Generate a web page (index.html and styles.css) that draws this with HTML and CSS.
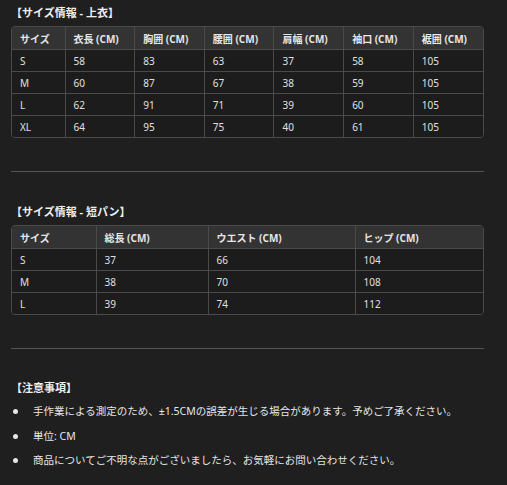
FILE: index.html
```html
<!DOCTYPE html>
<html lang="ja">
<head>
<meta charset="utf-8">
<link rel="stylesheet" href="styles.css">
</head>
<body>
<div class="page">
  <h2 class="title">【サイズ情報 - 上衣】</h2>
  <div class="table-wrap">
    <table class="size-table top">
      <colgroup>
        <col class="c-size"><col><col><col><col><col><col>
      </colgroup>
      <thead>
        <tr><th>サイズ</th><th>衣長 (CM)</th><th>胸囲 (CM)</th><th>腰囲 (CM)</th><th>肩幅 (CM)</th><th>袖口 (CM)</th><th>裾囲 (CM)</th></tr>
      </thead>
      <tbody>
        <tr><td>S</td><td>58</td><td>83</td><td>63</td><td>37</td><td>58</td><td>105</td></tr>
        <tr><td>M</td><td>60</td><td>87</td><td>67</td><td>38</td><td>59</td><td>105</td></tr>
        <tr><td>L</td><td>62</td><td>91</td><td>71</td><td>39</td><td>60</td><td>105</td></tr>
        <tr><td>XL</td><td>64</td><td>95</td><td>75</td><td>40</td><td>61</td><td>105</td></tr>
      </tbody>
    </table>
  </div>

  <hr class="divider">

  <h2 class="title second">【サイズ情報 - 短パン】</h2>
  <div class="table-wrap">
    <table class="size-table bottom">
      <colgroup>
        <col class="b1"><col class="b2"><col class="b3"><col>
      </colgroup>
      <thead>
        <tr><th>サイズ</th><th>総長 (CM)</th><th>ウエスト (CM)</th><th>ヒップ (CM)</th></tr>
      </thead>
      <tbody>
        <tr><td>S</td><td>37</td><td>66</td><td>104</td></tr>
        <tr><td>M</td><td>38</td><td>70</td><td>108</td></tr>
        <tr><td>L</td><td>39</td><td>74</td><td>112</td></tr>
      </tbody>
    </table>
  </div>

  <hr class="divider">

  <h2 class="title notes-title">【注意事項】</h2>
  <ul class="notes">
    <li>手作業による測定のため、±1.5CMの誤差が生じる場合があります。予めご了承ください。</li>
    <li>単位: CM</li>
    <li>商品についてご不明な点がございましたら、お気軽にお問い合わせください。</li>
  </ul>
</div>
</body>
</html>
```

FILE: styles.css
```css
html, body {
  margin: 0;
  padding: 0;
  background: #1f1f1f;
}
body {
  color: #e6e6e6;
  font-family: "Noto Sans", "Noto Sans CJK JP", sans-serif;
  font-size: 10px;
}
.page {
  width: 473px;
  padding: 5px 0 0 11px;
}
.title {
  margin: 0 0 5px 0;
  font-size: 11px;
  line-height: 16px;
  font-weight: bold;
  color: #eeeeee;
}
.title.second {
  margin-top: 32px;
}
.title.notes-title {
  margin-top: 31px;
  margin-bottom: 3px;
}
.table-wrap {
  border: 1px solid #4a4a4a;
  border-radius: 4px;
  overflow: hidden;
}
.size-table {
  width: 100%;
  border-collapse: collapse;
  table-layout: fixed;
}
.size-table th,
.size-table td {
  text-align: left;
  padding: 0 0 0 8px;
  border-left: 1px solid #4a4a4a;
  border-top: 1px solid #4a4a4a;
  white-space: nowrap;
}
.size-table th:first-child,
.size-table td:first-child {
  border-left: none;
}
.size-table thead th {
  border-top: none;
  background: #333333;
  font-weight: bold;
  height: 22px;
  color: #e6e6e6;
}
.size-table tbody td {
  background: #1c1c1c;
  height: 21px;
  color: #e0e0e0;
}
.size-table.top .c-size { width: 53px; }
.size-table.bottom .b1 { width: 84px; }
.size-table.bottom .b2 { width: 112px; }
.size-table.bottom .b3 { width: 147px; }
.divider {
  margin: 33px 0 0 0;
  border: none;
  border-top: 1px solid #555555;
  height: 0;
}
.notes {
  margin: 0;
  padding: 0;
  list-style: none;
}
.notes li {
  position: relative;
  padding-left: 22px;
  line-height: 24.5px;
  font-size: 10.5px;
  color: #e6e6e6;
}
.notes li::before {
  content: "";
  position: absolute;
  left: 2px;
  top: 10px;
  width: 5px;
  height: 5px;
  border-radius: 50%;
  background: #e6e6e6;
}
```
